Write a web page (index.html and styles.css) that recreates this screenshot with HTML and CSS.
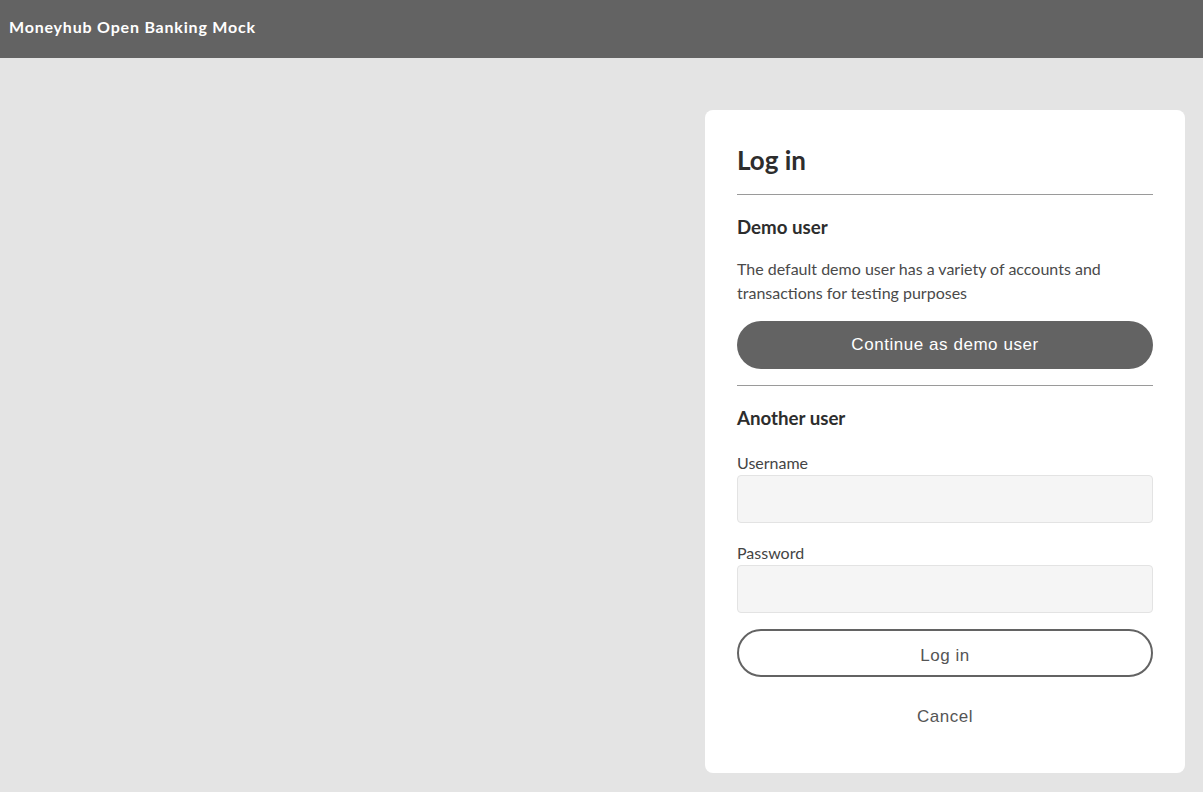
FILE: index.html
```html
<!DOCTYPE html>
<html lang="en">
<head>
<meta charset="utf-8">
<title>Moneyhub Open Banking Mock</title>
<link rel="stylesheet" href="styles.css">
</head>
<body>
<header class="topbar">
  <span class="brand">Moneyhub Open Banking Mock</span>
</header>
<main class="page">
  <section class="card">
    <h1 class="title">Log in</h1>
    <hr class="divider">
    <h2 class="subtitle">Demo user</h2>
    <p class="desc">The default demo user has a variety of accounts and transactions for testing purposes</p>
    <button class="btn btn-primary" type="button">Continue as demo user</button>
    <hr class="divider divider-2">
    <h2 class="subtitle">Another user</h2>
    <form class="form">
      <label class="field">
        <span class="label">Username</span>
        <input class="input" type="text">
      </label>
      <label class="field field-next">
        <span class="label">Password</span>
        <input class="input" type="password">
      </label>
      <button class="btn btn-outline" type="button">Log in</button>
      <button class="btn btn-link" type="button">Cancel</button>
    </form>
  </section>
</main>
</body>
</html>
```
FILE: styles.css
```css
* { box-sizing: border-box; }
html, body { margin: 0; padding: 0; }
body {
  background: #e4e4e4;
  font-family: Lato, "Liberation Sans", sans-serif;
  color: #333;
  min-height: 792px;
}
.topbar {
  height: 58px;
  background: #636363;
  display: flex;
  align-items: center;
  padding: 0 9px;
}
.brand {
  color: #fff;
  font-size: 16px;
  font-weight: 700;
  letter-spacing: 0.8px;
  padding-bottom: 6px;
}
.page {
  display: flex;
  justify-content: flex-end;
  padding: 52px 18px 0 0;
}
.card {
  width: 480px;
  height: 663px;
  background: #fff;
  border-radius: 8px;
  padding: 32px 32px 0 32px;
  display: flex;
  flex-direction: column;
}
.title {
  margin: 0;
  font-size: 26px;
  font-weight: 700;
  line-height: 36px;
  color: #2d2d2d;
}
.divider {
  border: 0;
  border-top: 1px solid #9a9a9a;
  margin: 16px 0 0 0;
  height: 0;
}
.divider-2 { margin-top: 16px; }
.subtitle {
  margin: 20px 0 0 0;
  font-size: 18.7px;
  font-weight: 700;
  line-height: 24px;
  color: #2d2d2d;
}
.desc {
  margin: 18px 0 0 0;
  font-size: 16px;
  line-height: 24px;
  color: #4a4a4a;
}
.btn {
  font-family: "Liberation Sans", Arial, sans-serif;
  font-size: 17px;
  letter-spacing: 0.55px;
  width: 100%;
  height: 48px;
  border-radius: 24px;
  cursor: pointer;
  padding: 0;
}
.btn-primary {
  margin-top: 16px;
  background: #636363;
  color: #fff;
  border: 0;
}
.form {
  display: flex;
  flex-direction: column;
  margin-top: 23px;
}
.field {
  display: flex;
  flex-direction: column;
}
.field-next { margin-top: 20px; }
.label {
  font-size: 16px;
  line-height: 20px;
  color: #444;
  margin-bottom: 2px;
}
.input {
  height: 48px;
  background: #f5f5f5;
  border: 1px solid #e3e3e3;
  border-radius: 4px;
  width: 100%;
}
.btn-outline {
  margin-top: 16px;
  padding-top: 5px;
  background: #fff;
  border: 2px solid #636363;
  color: #555;
}
.btn-link {
  margin-top: 16px;
  background: none;
  border: 0;
  color: #555;
}
```
